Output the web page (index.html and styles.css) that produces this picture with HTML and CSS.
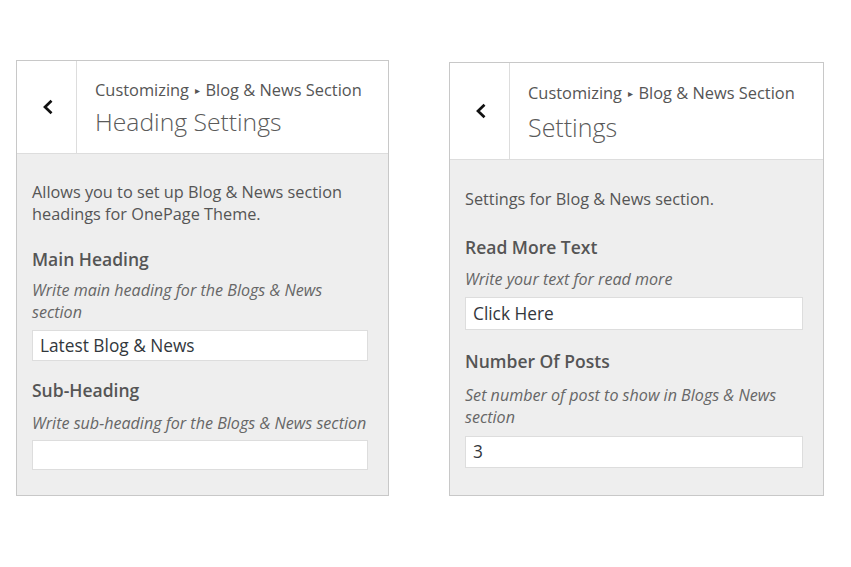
FILE: index.html
```html
<!DOCTYPE html>
<html>
<head>
<meta charset="utf-8">
<link rel="stylesheet" href="styles.css">
</head>
<body>
<div class="stage">
  <div class="panel panel-left">
    <div class="head">
      <div class="back">
        <svg width="12" height="16" viewBox="0 0 12 16"><polyline points="9.5,1.8 3,8 9.5,14.2" fill="none" stroke="#111" stroke-width="2.7"/></svg>
      </div>
      <div class="titles">
        <div class="crumb">Customizing <span class="tri">▸</span> Blog &amp; News Section</div>
        <div class="title">Heading Settings</div>
      </div>
    </div>
    <div class="body">
      <p class="desc">Allows you to set up Blog &amp; News section headings for OnePage Theme.</p>
      <div class="field">
        <div class="label">Main Heading</div>
        <div class="hint">Write main heading for the Blogs &amp; News section</div>
        <div class="input">Latest Blog &amp; News</div>
      </div>
      <div class="field">
        <div class="label">Sub-Heading</div>
        <div class="hint">Write sub-heading for the Blogs &amp; News section</div>
        <div class="input"></div>
      </div>
    </div>
  </div>
  <div class="panel panel-right">
    <div class="head">
      <div class="back">
        <svg width="12" height="16" viewBox="0 0 12 16"><polyline points="9.5,1.8 3,8 9.5,14.2" fill="none" stroke="#111" stroke-width="2.7"/></svg>
      </div>
      <div class="titles">
        <div class="crumb">Customizing <span class="tri">▸</span> Blog &amp; News Section</div>
        <div class="title">Settings</div>
      </div>
    </div>
    <div class="body">
      <p class="desc">Settings for Blog &amp; News section.</p>
      <div class="field">
        <div class="label">Read More Text</div>
        <div class="hint">Write your text for read more</div>
        <div class="input">Click Here</div>
      </div>
      <div class="field">
        <div class="label">Number Of Posts</div>
        <div class="hint">Set number of post to show in Blogs &amp; News section</div>
        <div class="input">3</div>
      </div>
    </div>
  </div>
</div>
</body>
</html>
```

FILE: styles.css
```css
html, body {
  margin: 0;
  padding: 0;
  background: #fff;
}
body {
  font-family: "Open Sans", "Noto Sans", sans-serif;
  color: #555;
}
.stage {
  display: flex;
  align-items: flex-start;
  padding: 60px 0 0 16px;
  gap: 60px;
}
.panel {
  border: 1px solid #c8c8c8;
  background: #eee;
  box-sizing: border-box;
}
.panel-left {
  width: 373px;
  height: 436px;
}
.panel-right {
  width: 375px;
  height: 434px;
  margin-top: 2px;
}
.head {
  display: flex;
  background: #fff;
  border-bottom: 1px solid #ddd;
  height: 93px;
  box-sizing: border-box;
}
.panel-right .head {
  height: 97px;
}
.back {
  width: 60px;
  flex: none;
  border-right: 1px solid #ddd;
  box-sizing: border-box;
  display: flex;
  align-items: center;
  justify-content: center;
}
.back svg {
  display: block;
  margin-left: 3px;
}
.panel-right .back svg {
  margin-left: 2px;
}
.titles {
  padding: 18px 0 0 18px;
}
.panel-right .titles {
  padding-top: 19px;
}
.crumb {
  font-size: 16.4px;
  line-height: 22px;
  color: #555;
  white-space: nowrap;
}
.tri {
  font-size: 10px;
  position: relative;
  top: -2px;
  margin: 0 1px 0 2px;
}
.title {
  font-size: 24.7px;
  font-weight: 300;
  line-height: 34px;
  margin-top: 2px;
  color: #5a5a5a;
}
.panel-right .title {
  font-size: 25px;
  margin-top: 4px;
}
.body {
  padding: 27px 20px 0 15px;
}
.panel-right .body {
  padding-top: 28px;
}
.desc {
  margin: 0;
  font-size: 16.3px;
  line-height: 22px;
  color: #555;
}
.field {
  margin-top: 21px;
}
.field + .field {
  margin-top: 16px;
}
.panel-right .field {
  margin-top: 24px;
}
.panel-right .field + .field {
  margin-top: 18px;
}
.label {
  font-size: 17.5px;
  font-weight: 600;
  line-height: 26px;
  color: #555;
}
.hint {
  margin-top: 7px;
  font-size: 16.1px;
  font-style: italic;
  line-height: 22px;
  color: #666;
}
.field + .field .hint {
  margin-top: 9px;
}
.panel-right .hint {
  margin-top: 8px;
}
.panel-right .field + .field .hint {
  margin-top: 10px;
}
.input {
  margin-top: 7px;
  height: 31px;
  box-sizing: border-box;
  background: #fff;
  border: 1px solid #ddd;
  font-size: 17.3px;
  line-height: 29px;
  padding-left: 7px;
  color: #32373c;
}
.field + .field .input {
  margin-top: 6px;
  height: 30px;
}
.panel-right .input {
  height: 33px;
  line-height: 31px;
}
.panel-right .field + .field .input {
  margin-top: 8px;
  height: 32px;
  line-height: 30px;
}
```
